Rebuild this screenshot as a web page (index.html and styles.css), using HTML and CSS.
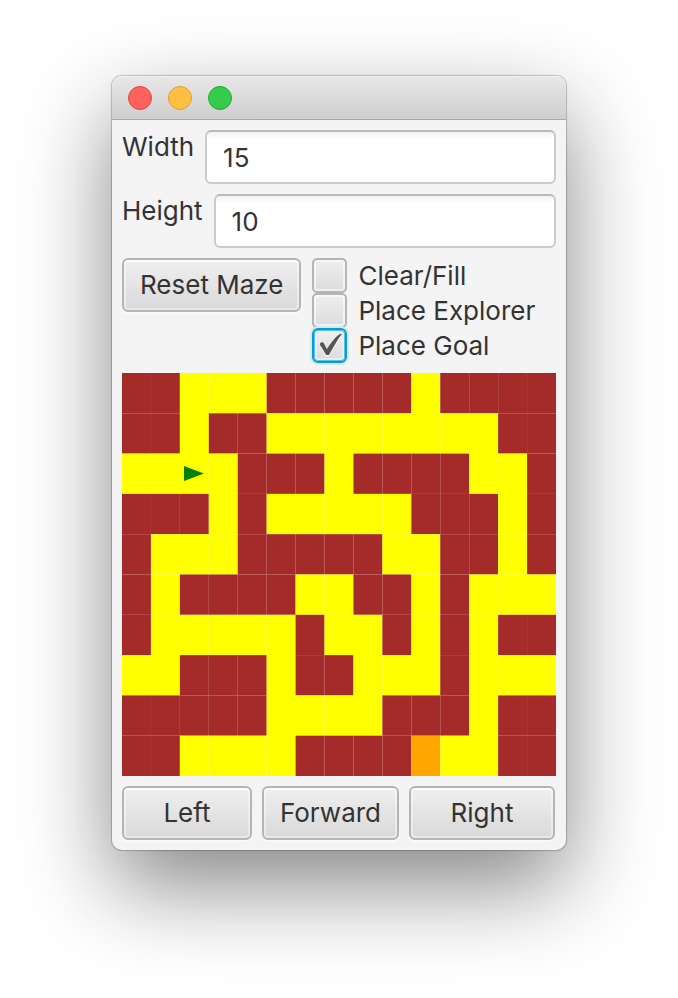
FILE: index.html
```html
<!DOCTYPE html>
<html lang="en">
<head>
<meta charset="utf-8">
<title>Maze</title>
<link rel="stylesheet" href="styles.css">
</head>
<body>
<main class="window">
  <header class="titlebar">
    <button class="light close" type="button" aria-label="Close"></button>
    <button class="light minimize" type="button" aria-label="Minimize"></button>
    <button class="light zoom" type="button" aria-label="Zoom"></button>
  </header>
  <div class="content">
    <div class="field">
      <label for="width">Width</label>
      <input id="width" class="text" type="text" value="15">
    </div>
    <div class="field">
      <label for="height">Height</label>
      <input id="height" class="text" type="text" value="10">
    </div>
    <div class="tools">
      <button class="button" type="button">Reset Maze</button>
      <div class="options">
        <label class="option"><input type="checkbox"><span>Clear/Fill</span></label>
        <label class="option"><input type="checkbox"><span>Place Explorer</span></label>
        <label class="option"><span class="tick"><input type="checkbox" checked><svg class="mark" viewBox="0 0 35 35" aria-hidden="true"><path class="mark-glow" d="M8 17 L11 16 L16 23 C20 17 24 11 29 7 L30 8 C25 14 21 21 17 28 L14 29 C12 25 10 21 8 17Z"/><path d="M8 15 L11 14 L15 21 C19 15 23 9 28 6 L30 6 C25 12 21 20 17 27 L14 27 C12 23 10 20 8 17Z"/></svg></span><span>Place Goal</span></label>
      </div>
    </div>
    <svg class="maze" id="maze" viewBox="0 0 434 403" role="img" aria-label="Maze"></svg>
    <div class="moves">
      <button class="button" type="button">Left</button>
      <button class="button" type="button">Forward</button>
      <button class="button" type="button">Right</button>
    </div>
  </div>
</main>
<script src="maze.js"></script>
</body>
</html>
```
FILE: styles.css
```css
* {
  box-sizing: border-box;
}

body {
  margin: 0;
  padding: 76px 112px 148px;
  background: #fff;
  color: #333;
  font: 26px/34px Inter, "Liberation Sans", sans-serif;
}

button,
input {
  margin: 0;
  font: inherit;
  color: inherit;
}

.window {
  border-radius: 10px;
  background: #f4f4f4;
  box-shadow: 0 0 1px 1px rgba(0, 0, 0, 0.22), 0 36px 90px rgba(0, 0, 0, 0.48);
}

.titlebar {
  display: flex;
  align-items: center;
  gap: 16px;
  height: 44px;
  padding: 0 16px;
  border-bottom: 1px solid #a8a8a8;
  border-radius: 10px 10px 0 0;
  background: linear-gradient(#e8e8e8, #cecece);
  box-shadow: inset 0 1px #f2f2f2;
}

.light {
  width: 24px;
  height: 24px;
  padding: 0;
  border: 1px solid;
  border-radius: 50%;
}

.close {
  border-color: #e2463f;
  background: #ff625c;
}

.minimize {
  border-color: #dfa032;
  background: #ffbf42;
}

.zoom {
  border-color: #1fac33;
  background: #35cb4b;
}

.content {
  display: flex;
  flex-direction: column;
  gap: 10px;
  padding: 10px;
}

.field {
  display: flex;
  align-items: flex-start;
  gap: 11px;
}

.text {
  flex: 1;
  min-width: 0;
  height: 54px;
  padding: 0 16px;
  border: 2px solid #cbcbcb;
  border-top-color: #b8b8b8;
  border-radius: 6px;
  background: linear-gradient(#f2f2f2, #fff 8px);
  outline: 0;
}

.button {
  height: 54px;
  padding: 0 16px;
  border: 2px solid #b5b5b5;
  border-radius: 6px;
  background: linear-gradient(#efefef, #d9d9d9);
  box-shadow: inset 0 0 0 2px rgba(255, 255, 255, 0.4), inset 0 2px rgba(255, 255, 255, 0.8), 0 2px #fafafa;
}

.tools {
  display: flex;
  align-items: flex-start;
  gap: 11px;
}

.option {
  display: flex;
  align-items: center;
  gap: 11px;
  height: 35px;
}

.option input {
  display: block;
  appearance: none;
  width: 35px;
  height: 35px;
  border: 2px solid #b5b5b5;
  border-radius: 5px;
  background: linear-gradient(#efefef, #dcdcdc);
  box-shadow: inset 0 0 0 2px rgba(255, 255, 255, 0.6);
}

.option input:checked {
  border: 2px solid #039ed3;
  border-radius: 6px;
  box-shadow: inset 0 0 0 1px #5fbfe0, inset 0 0 0 3px #e6eef1, 0 0 0 2px #d5e8f1;
}

.tick {
  position: relative;
}

.mark {
  position: absolute;
  inset: 0;
  fill: #555;
  pointer-events: none;
}

.mark .mark-glow {
  fill: #fff;
}

.maze {
  display: block;
  width: 100%;
}

.wall {
  fill: brown;
}

.path {
  fill: yellow;
}

.goal {
  fill: orange;
}

.explorer {
  fill: green;
}

.moves {
  display: grid;
  grid-template-columns: 130fr 137fr 146fr;
  gap: 10px;
  padding-right: 1px;
}
```
FILE: maze.js
```js
const rows = [
  "##...#####.####",
  "##.##........##",
  "....###.####..#",
  "###.#.....###.#",
  "#...#####..##.#",
  "#.####..##.#...",
  "#.....#..#.#.##",
  "..###.##...#...",
  "#####....###.##",
  "##....####o..##"
];
const kinds = { "#": "wall", ".": "path", "o": "goal" };
const maze = document.getElementById("maze");
const cellWidth = 434 / 15;
const cellHeight = 403 / 10;

function add(tag, attributes) {
  const node = document.createElementNS("http://www.w3.org/2000/svg", tag);
  for (const name in attributes) node.setAttribute(name, attributes[name]);
  maze.appendChild(node);
}

rows.forEach((row, y) => {
  [...row].forEach((cell, x) => {
    add("rect", {
      class: kinds[cell],
      x: x * cellWidth,
      y: y * cellHeight,
      width: cellWidth,
      height: cellHeight
    });
  });
});

add("polygon", { class: "explorer", points: "62,93 82,100.5 62,108" });
```
